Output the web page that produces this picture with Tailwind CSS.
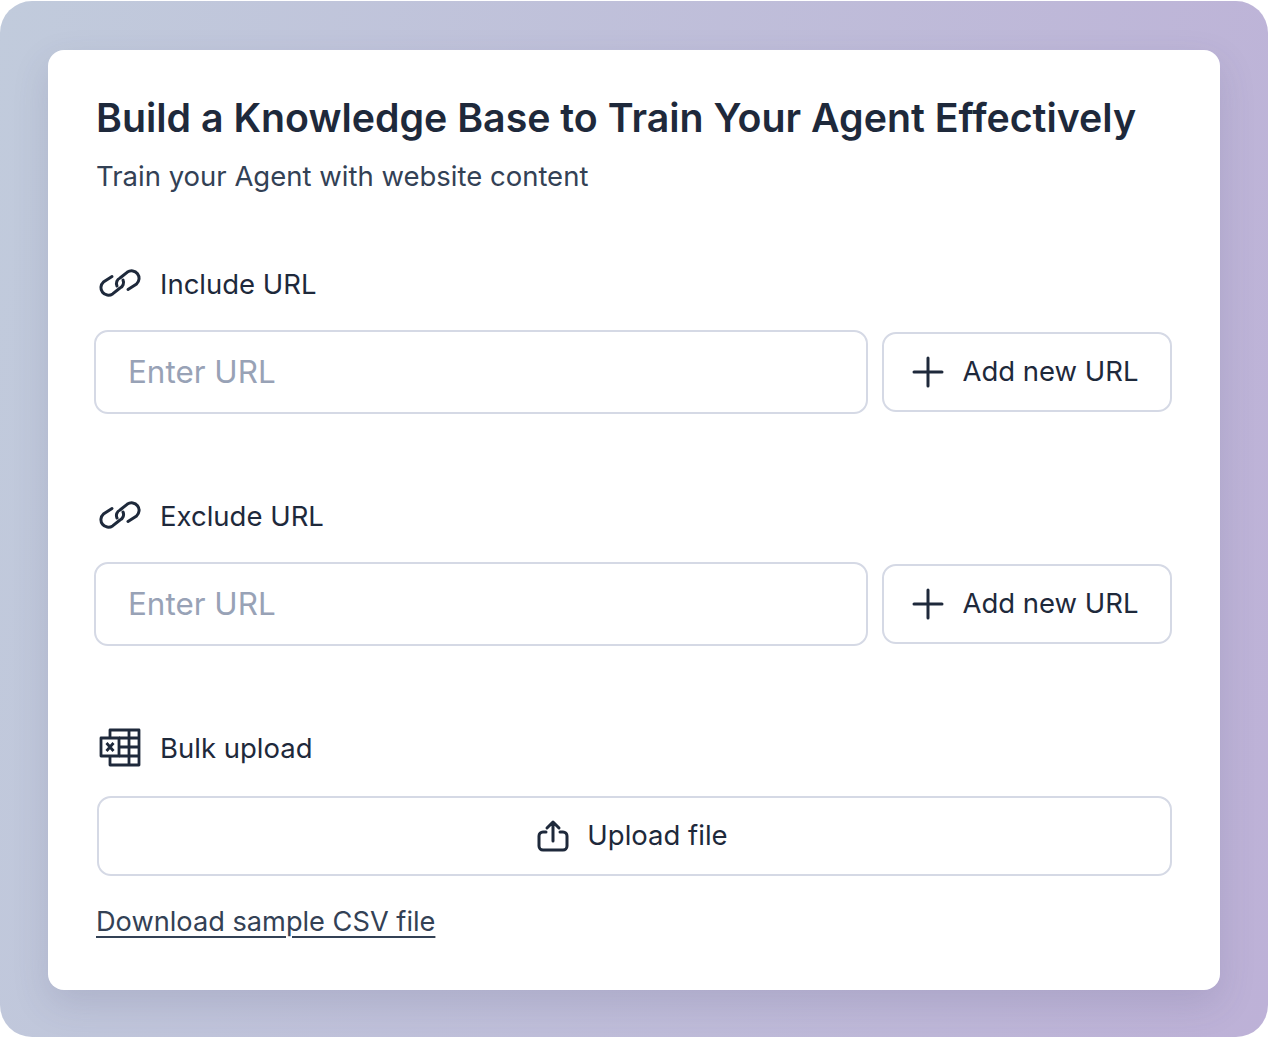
<!DOCTYPE html>
<html lang="en">
<head>
  <meta charset="UTF-8" />
  <meta name="viewport" content="width=device-width, initial-scale=1.0" />
  <title>Knowledge Base</title>
  <script src="https://cdn.jsdelivr.net/npm/@tailwindcss/browser@4"></script>
</head>
<body class="bg-white font-['Inter',sans-serif]">

  <!-- Gradient frame -->
  <div class="w-[1268px] h-[1036px] mt-px rounded-[32px] bg-[linear-gradient(100deg,#c1cbdc,#bdb1d7)] pt-[49px] pl-[48px]">

    <!-- Card -->
    <div class="w-[1172px] h-[940px] bg-white rounded-2xl shadow-[0_14px_36px_rgba(70,70,110,0.15)] pt-[42px] pl-[48px] pr-[48px]">
      <h1 class="text-[39.3px] leading-[52px] font-semibold text-[#1e293b] whitespace-nowrap">Build a Knowledge Base to Train Your Agent Effectively</h1>
      <p class="mt-[12px] text-[27.5px] leading-[40px] text-[#334155]">Train your Agent with website content</p>

      <!-- Include URL -->
      <div class="mt-[68px] flex items-center gap-[19px] h-[40px] pl-[3px]">
        <svg class="w-[42px] h-[32px] text-[#1e293b]" viewBox="0 0 42 32" fill="none" stroke="currentColor" stroke-width="3" stroke-linecap="round" stroke-linejoin="round">
          <path d="M13 8.500L4.400 14.100A7.500 7.500 0 0 0 13.600 25.900L21 20A6 6 0 0 0 24 12"/>
          <path d="M29 21.500L37.600 15.900A7.500 7.500 0 0 0 28.400 4.100L21 10A6 6 0 0 0 18 18"/>
        </svg>
        <span class="text-[27.5px] leading-[40px] text-[#1e293b]">Include URL</span>
      </div>
      <div class="mt-[26px] flex items-center ml-[-2px] gap-[14px]">
        <input type="text" placeholder="Enter URL" class="w-[774px] shrink-0 h-[84px] px-[32px] rounded-[14px] border-2 border-[#d5d9e5] bg-white text-[31.4px] text-[#1e293b] placeholder:text-[#98a2b6]" />
        <button class="w-[290px] shrink-0 h-[80px] pr-[4px] flex items-center justify-center gap-[17px] rounded-[14px] border-2 border-[#d5d9e5] bg-white text-[27.5px] text-[#1e293b]">
          <svg class="w-[34px] h-[34px]" viewBox="0 0 34 34" fill="none" stroke="currentColor" stroke-width="3" stroke-linecap="round"><path d="M17 3v28M3 17h28"/></svg>
          Add new URL
        </button>
      </div>

      <!-- Exclude URL -->
      <div class="mt-[82px] flex items-center gap-[19px] h-[40px] pl-[3px]">
        <svg class="w-[42px] h-[32px] text-[#1e293b]" viewBox="0 0 42 32" fill="none" stroke="currentColor" stroke-width="3" stroke-linecap="round" stroke-linejoin="round">
          <path d="M13 8.500L4.400 14.100A7.500 7.500 0 0 0 13.600 25.900L21 20A6 6 0 0 0 24 12"/>
          <path d="M29 21.500L37.600 15.900A7.500 7.500 0 0 0 28.400 4.100L21 10A6 6 0 0 0 18 18"/>
        </svg>
        <span class="text-[27.5px] leading-[40px] text-[#1e293b]">Exclude URL</span>
      </div>
      <div class="mt-[26px] flex items-center ml-[-2px] gap-[14px]">
        <input type="text" placeholder="Enter URL" class="w-[774px] shrink-0 h-[84px] px-[32px] rounded-[14px] border-2 border-[#d5d9e5] bg-white text-[31.4px] text-[#1e293b] placeholder:text-[#98a2b6]" />
        <button class="w-[290px] shrink-0 h-[80px] pr-[4px] flex items-center justify-center gap-[17px] rounded-[14px] border-2 border-[#d5d9e5] bg-white text-[27.5px] text-[#1e293b]">
          <svg class="w-[34px] h-[34px]" viewBox="0 0 34 34" fill="none" stroke="currentColor" stroke-width="3" stroke-linecap="round"><path d="M17 3v28M3 17h28"/></svg>
          Add new URL
        </button>
      </div>

      <!-- Bulk upload -->
      <div class="mt-[82px] flex items-center gap-[19px] h-[40px] pl-[3px]">
        <svg class="w-[42px] h-[42px] text-[#1e293b]" viewBox="0 0 42 42" fill="none" stroke="currentColor" stroke-width="2.800" stroke-linejoin="round">
          <path d="M11 11V3h29v35H11v-9M30 3v35M20 11h20M20 20h20M20 29h20"/>
          <path d="M2 11h18v18H2z"/>
          <path d="M7.500 16l7 8M14.500 16l-7 8"/>
        </svg>
        <span class="text-[27.5px] leading-[40px] text-[#1e293b]">Bulk upload</span>
      </div>
      <button class="mt-[28px] ml-px w-[1075px] h-[80px] pr-[5px] flex items-center justify-center gap-[17px] rounded-[14px] border-2 border-[#d5d9e5] bg-white text-[27.5px] text-[#1e293b]">
        <svg class="w-[34px] h-[34px]" viewBox="0 0 34 34" fill="none" stroke="currentColor" stroke-width="3" stroke-linecap="round" stroke-linejoin="round">
          <path d="M10 13H7a4 4 0 0 0-4 4v10a4 4 0 0 0 4 4h20a4 4 0 0 0 4-4V17a4 4 0 0 0-4-4h-3M17 22V3M11 9l6-6 6 6"/>
        </svg>
        Upload file
      </button>
      <a href="#" class="mt-[26px] inline-block text-[27.2px] leading-[40px] text-[#334155] underline decoration-2 underline-offset-[5px]">Download sample CSV file</a>
    </div>
  </div>

</body>
</html>
